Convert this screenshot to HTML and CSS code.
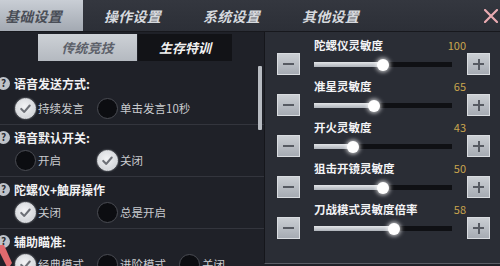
FILE: index.html
```html
<!DOCTYPE html>
<html lang="zh-CN">
<head>
<meta charset="utf-8">
<title>设置</title>
<link rel="stylesheet" href="styles.css">
</head>
<body>
<div class="screen">
  <div class="tabbar">
    <div class="tab active">基础设置</div>
    <div class="tab">操作设置</div>
    <div class="tab">系统设置</div>
    <div class="tab">其他设置</div>
    <svg class="close" width="14" height="14" viewBox="0 0 14 14"><path d="M1 1 L13 13 M13 1 L1 13" stroke="#e9aab1" stroke-width="2.2" stroke-linecap="round"/></svg>
  </div>
  <div class="main">
    <div class="left">
      <div class="subtabs">
        <div class="subtab active">传统竞技</div>
        <div class="subtab">生存特训</div>
      </div>

      <div class="section first">
        <div class="label"><span class="help">?</span>语音发送方式:</div>
        <div class="options">
          <div class="opt"><span class="radio on"><svg viewBox="0 0 20 20"><path d="M5 10.5 L8.6 14 L15 6.5" fill="none" stroke="#6c6f76" stroke-width="2.4" stroke-linecap="round" stroke-linejoin="round"/></svg></span>持续发言</div>
          <div class="opt"><span class="radio"></span>单击发言10秒</div>
        </div>
      </div>

      <div class="section">
        <div class="label"><span class="help">?</span>语音默认开关:</div>
        <div class="options">
          <div class="opt"><span class="radio"></span>开启</div>
          <div class="opt"><span class="radio on"><svg viewBox="0 0 20 20"><path d="M5 10.5 L8.6 14 L15 6.5" fill="none" stroke="#6c6f76" stroke-width="2.4" stroke-linecap="round" stroke-linejoin="round"/></svg></span>关闭</div>
        </div>
      </div>

      <div class="section">
        <div class="label"><span class="help">?</span>陀螺仪+触屏操作</div>
        <div class="options">
          <div class="opt"><span class="radio on"><svg viewBox="0 0 20 20"><path d="M5 10.5 L8.6 14 L15 6.5" fill="none" stroke="#6c6f76" stroke-width="2.4" stroke-linecap="round" stroke-linejoin="round"/></svg></span>关闭</div>
          <div class="opt"><span class="radio"></span>总是开启</div>
        </div>
      </div>

      <div class="section">
        <div class="label"><span class="help">?</span>辅助瞄准:</div>
        <div class="options">
          <div class="opt"><span class="radio on"><svg viewBox="0 0 20 20"><path d="M5 10.5 L8.6 14 L15 6.5" fill="none" stroke="#6c6f76" stroke-width="2.4" stroke-linecap="round" stroke-linejoin="round"/></svg></span>经典模式</div>
          <div class="opt"><span class="radio"></span>进阶模式</div>
          <div class="opt"><span class="radio"></span>关闭</div>
        </div>
      </div>

      <div class="scrollbar"></div>
      <svg class="arrow" width="12" height="24" viewBox="0 0 12 24"><path d="M0 0 L4 0 L12 18 L8 24 L0 8 Z" fill="#e06a6e"/></svg>
    </div>

    <div class="right">
      <div class="srow">
        <div class="shead"><span class="sname">陀螺仪灵敏度</span><span class="sval">100</span></div>
        <div class="sctrl">
          <div class="btn"><span class="minus"></span></div>
          <div class="track"><div class="fill" style="width:50%"><span class="knob"></span></div></div>
          <div class="btn"><span class="minus"></span><span class="vbar"></span></div>
        </div>
      </div>
      <div class="srow">
        <div class="shead"><span class="sname">准星灵敏度</span><span class="sval">65</span></div>
        <div class="sctrl">
          <div class="btn"><span class="minus"></span></div>
          <div class="track"><div class="fill" style="width:43.5%"><span class="knob"></span></div></div>
          <div class="btn"><span class="minus"></span><span class="vbar"></span></div>
        </div>
      </div>
      <div class="srow">
        <div class="shead"><span class="sname">开火灵敏度</span><span class="sval">43</span></div>
        <div class="sctrl">
          <div class="btn"><span class="minus"></span></div>
          <div class="track"><div class="fill" style="width:28%"><span class="knob"></span></div></div>
          <div class="btn"><span class="minus"></span><span class="vbar"></span></div>
        </div>
      </div>
      <div class="srow">
        <div class="shead"><span class="sname">狙击开镜灵敏度</span><span class="sval">50</span></div>
        <div class="sctrl">
          <div class="btn"><span class="minus"></span></div>
          <div class="track"><div class="fill" style="width:50%"><span class="knob"></span></div></div>
          <div class="btn"><span class="minus"></span><span class="vbar"></span></div>
        </div>
      </div>
      <div class="srow">
        <div class="shead"><span class="sname">刀战模式灵敏度倍率</span><span class="sval">58</span></div>
        <div class="sctrl">
          <div class="btn"><span class="minus"></span></div>
          <div class="track"><div class="fill" style="width:58%"><span class="knob"></span></div></div>
          <div class="btn"><span class="minus"></span><span class="vbar"></span></div>
        </div>
      </div>
    </div>
  </div>
</div>
</body>
</html>
```

FILE: styles.css
```css
* { box-sizing: border-box; }
html, body {
  margin: 0;
  padding: 0;
  background: #1e2027;
}
body {
  font-family: "Noto Sans CJK SC", "Noto Sans", sans-serif;
  width: 500px;
  height: 266px;
  overflow: hidden;
}
.screen {
  width: 500px;
  height: 266px;
  display: flex;
  flex-direction: column;
  background: #1e2027;
  overflow: hidden;
}

/* top tabs */
.tabbar {
  height: 32px;
  flex: none;
  display: flex;
  align-items: stretch;
  background: linear-gradient(#34373f, #2c2f37);
  border-bottom: 1px solid #17181d;
}
.tab {
  width: 99px;
  flex: none;
  display: flex;
  align-items: center;
  justify-content: center;
  font-size: 14px;
  font-weight: 700;
  font-style: italic;
  color: #d6d9de;
  letter-spacing: 0.3px;
}
.tab:first-child { margin-left: -16px; }
.tab.active {
  background: linear-gradient(#c9ced5, #a3a9b2);
  color: #4a4e57;
}
.close {
  margin-left: auto;
  margin-right: 2px;
  align-self: center;
}

/* main area */
.main {
  flex: 1;
  display: grid;
  grid-template-columns: 264px 236px;
  min-height: 0;
}
.left {
  position: relative;
  overflow: hidden;
  background: #1f2128;
}
.subtabs {
  display: flex;
  margin: 2px 0 12px 38px;
  height: 27px;
}
.subtab {
  width: 94px;
  display: flex;
  align-items: center;
  justify-content: center;
  font-size: 13px;
  font-weight: 700;
  font-style: italic;
  color: #f2f2f2;
  background: #121317;
}
.subtab.active {
  width: 99px;
  margin-right: 1px;
  background: linear-gradient(#cdd1d6, #b4b9c0);
  color: #5d616a;
}

.section {
  padding: 3px 0 5px 0;
  border-bottom: 1px solid #33353d;
}
.section.first { padding-top: 1px; }
.label {
  height: 18px;
  display: flex;
  align-items: center;
  font-size: 12px;
  font-weight: 700;
  color: #f1f1f3;
  white-space: nowrap;
}
.help {
  width: 13px;
  height: 13px;
  margin-left: -3px;
  margin-right: 4px;
  border-radius: 50%;
  background: #bfc3c9;
  color: #2a2c33;
  font-size: 10px;
  font-weight: 700;
  display: flex;
  align-items: center;
  justify-content: center;
  line-height: 1;
}
.options {
  height: 22px;
  margin-top: 3px;
  display: flex;
  padding-left: 15px;
}
.section.first .options { margin-top: 5px; }
.opt {
  width: 82px;
  flex: none;
  display: flex;
  align-items: center;
  font-size: 11.5px;
  color: #c9cbcf;
  white-space: nowrap;
}
.radio {
  width: 21px;
  height: 21px;
  border-radius: 50%;
  flex: none;
  margin-right: 2px;
  background: #0c0d11;
  border: 1.5px solid #4a4c53;
  display: flex;
  align-items: center;
  justify-content: center;
}
.radio.on {
  background: radial-gradient(circle at 45% 40%, #f2f3f5, #c9ccd1);
  border: 1.5px solid #e6e8eb;
  box-shadow: 0 0 2px #9ea2a8;
}
.radio svg { width: 17px; height: 17px; }

.scrollbar {
  position: absolute;
  left: 258px;
  top: 34px;
  width: 4px;
  height: 64px;
  background: #b7bbc1;
  border-radius: 1px;
}
.arrow {
  position: absolute;
  left: 0;
  top: 213px;
}

/* right panel */
.right {
  background: #2a2d35;
  border-left: 1px solid #15161b;
  border-bottom: 1px solid #5b5e66;
  height: 232px;
  padding: 5px 10px 0 12px;
}
.srow {
  height: 41px;
}
.shead {
  height: 16px;
  display: flex;
  align-items: center;
  justify-content: space-between;
  padding-left: 37px;
  padding-right: 24px;
}
.sname {
  font-size: 11.5px;
  font-weight: 700;
  color: #f3f3f5;
}
.sval {
  font-size: 11px;
  color: #c9a54e;
}
.sctrl {
  height: 22px;
  display: grid;
  grid-template-columns: 23px 1fr 23px;
  align-items: center;
  width: 213px;
}
.btn {
  width: 23px;
  height: 22px;
  position: relative;
  background: linear-gradient(#cbcfd4, #a6abb3);
  border: 1px solid #d9dce0;
}
.minus {
  position: absolute;
  left: 5px;
  top: 9px;
  width: 11px;
  height: 2px;
  background: #565a62;
}
.vbar {
  position: absolute;
  left: 9.5px;
  top: 4.5px;
  width: 2px;
  height: 11px;
  background: #565a62;
}
.track {
  margin: 0 15px 0 14px;
  height: 5px;
  background: #0f1014;
  position: relative;
}
.fill {
  height: 100%;
  background: linear-gradient(#e3e5e8, #aeb3ba);
  position: relative;
}
.knob {
  position: absolute;
  right: -6px;
  top: -3px;
  width: 12px;
  height: 12px;
  border-radius: 50%;
  background: #ffffff;
  box-shadow: 0 0 4px 1px rgba(255,255,255,0.8);
}
```
